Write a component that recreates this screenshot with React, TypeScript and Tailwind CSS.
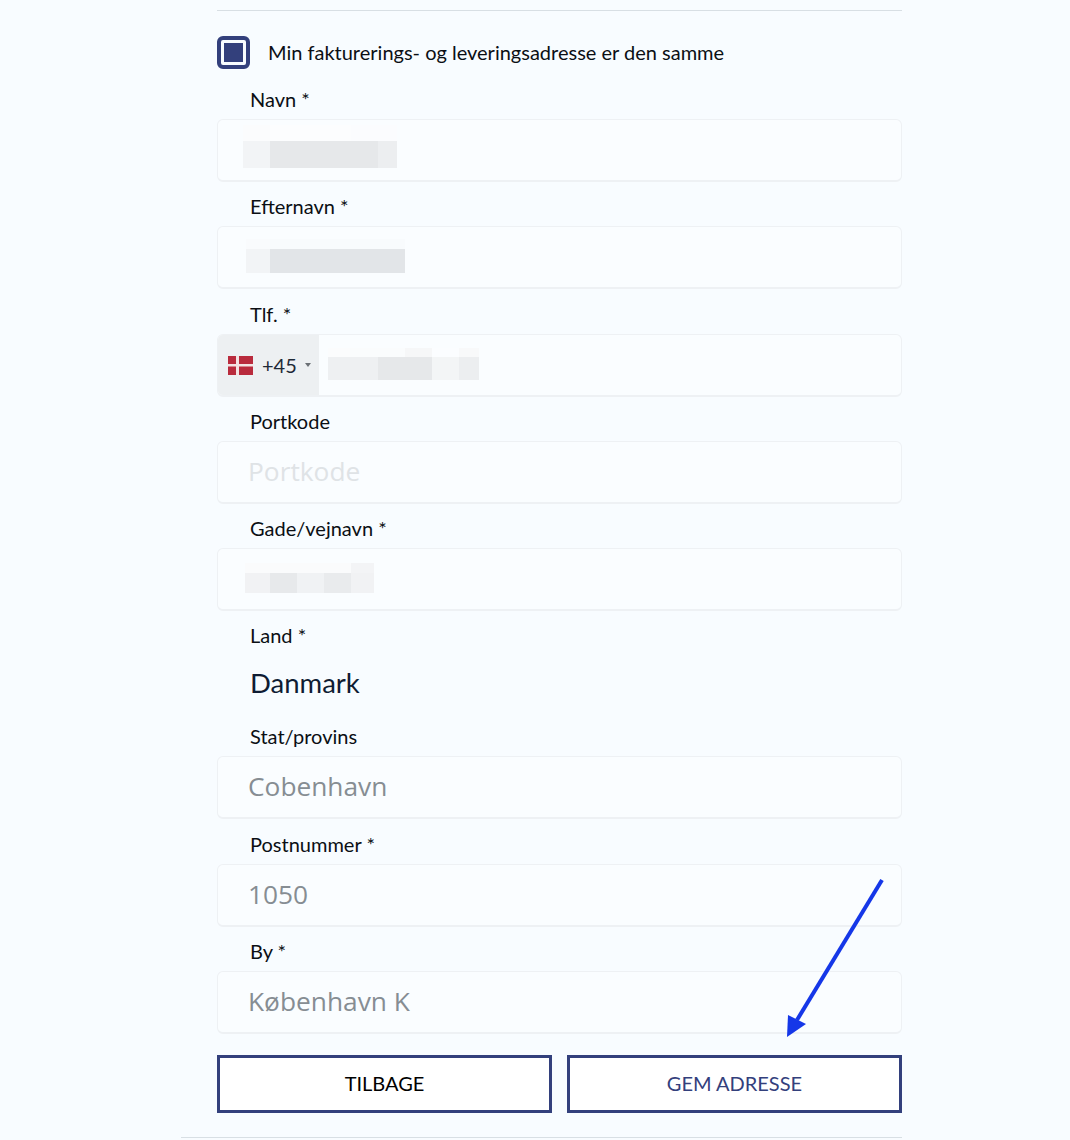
import React from "react";

function Label({ children, className = "pt-[6px]" }: { children: React.ReactNode; className?: string }) {
  return <div className={`h-[38px] pl-[33px] text-[20px] leading-[24px] text-[#0b0f14] font-['Lato',sans-serif] ${className}`}>{children}</div>;
}

function Box({ children, className = "" }: { children?: React.ReactNode; className?: string }) {
  return (
    <div className={`h-[63px] rounded-[6px] border border-[#eef1f4] border-b-2 bg-[#fafdff] flex items-center overflow-hidden font-['Open_Sans',sans-serif] text-[26.3px] ${className}`}>
      {children}
    </div>
  );
}

function Pix({ rows, h, className = "" }: { rows: [number, string][][]; h: number[]; className?: string }) {
  return (
    <div className={`flex flex-col ${className}`}>
      {rows.map((r, i) => (
        <div key={i} className="flex" style={{ height: h[i] }}>
          {r.map(([w, c], j) => (
            <div key={j} style={{ width: w, background: c }} />
          ))}
        </div>
      ))}
    </div>
  );
}

function Arrow() {
  return (
    <svg className="absolute left-[770px] top-[870px]" width="125" height="175" viewBox="0 0 125 175">
      <path d="M112 10 L27 150" stroke="#1537e8" strokeWidth="4" fill="none" />
      <path d="M17 167 L18 145 L36 154 Z" fill="#1537e8" />
    </svg>
  );
}

export default function App() {
  return (
    <div className="relative h-[1140px] w-[1070px] overflow-hidden bg-[#f8fcff]">
      <div className="ml-[217px] w-[685px] pt-[10px]">
        <div className="h-px bg-[#d8dfe4]" />
        <div className="mt-[25px] flex h-[33px] items-center">
          <div className="flex h-[33px] w-[33px] items-center justify-center rounded-[6px] border-[4px] border-[#33407c] bg-[#f8fcff]">
            <div className="h-[19px] w-[19px] bg-[#33407c]" />
          </div>
          <span className="mb-[2px] ml-[18px] font-['Lato',sans-serif] text-[20px] text-[#0b0f14]">Min fakturerings- og leveringsadresse er den samme</span>
        </div>
        <div className="mt-[12px]"><Label>Navn *</Label></div>
        <Box className="pl-[25px]">
          <Pix className="mb-[7px]" h={[16, 27]} rows={[[[27, "#fbfcfd"], [27, "#fcfdfe"], [54, "#fcfdfe"], [46, "#fbfcfe"]], [[27, "#f2f4f6"], [108, "#e6e8ea"], [19, "#eceef0"]]]} />
        </Box>
        <div className="mt-[6px]"><Label>Efternavn *</Label></div>
        <Box className="pl-[28px]">
          <Pix className="mb-[3px]" h={[10, 24]} rows={[[[24, "#f9fbfd"], [135, "#f8fbfd"]], [[24, "#f2f4f6"], [135, "#e2e5e8"]]]} />
        </Box>
        <div className="mt-[7px]"><Label>Tlf. *</Label></div>
        <Box>
          <div className="flex h-full w-[101px] shrink-0 items-center bg-[#edf0f2] pl-[10px] font-['Lato',sans-serif] text-[20px] text-[#1f2a37]">
            <svg width="25" height="19" viewBox="0 0 25 19" className="shrink-0">
              <rect width="25" height="19" fill="#b92b3d" />
              <rect x="8" width="3" height="19" fill="#f3e3e3" />
              <rect y="8" width="25" height="2.5" fill="#f3e3e3" />
            </svg>
            <span className="ml-[9px]">+45</span>
            <span className="ml-[8px] h-0 w-0 border-x-[3.5px] border-t-[4px] border-x-transparent border-t-[#6b7075]" />
          </div>
          <div className="mb-[3px] ml-[9px]">
            <Pix h={[9, 23]} rows={[[[22, "#fbfcfd"], [55, "#fafcfd"], [27, "#f6f7f8"], [27, "#fbfdff"], [20, "#f8f9fa"]], [[50, "#eef0f2"], [54, "#e6e8ea"], [27, "#f3f5f6"], [20, "#eceef0"]]]} />
          </div>
        </Box>
        <div className="mt-[6px]"><Label>Portkode</Label></div>
        <Box className="pl-[30px] text-[#dfe3e6]">Portkode</Box>
        <div className="mt-[6px]"><Label>Gade/vejnavn *</Label></div>
        <Box className="pl-[27px]">
          <Pix className="mb-[3px]" h={[10, 20]} rows={[[[25, "#fafbfc"], [27, "#fafbfc"], [54, "#fafbfc"], [23, "#f3f4f6"]], [[25, "#f1f2f4"], [27, "#e7e9eb"], [27, "#f0f2f4"], [27, "#e9ebed"], [23, "#f1f2f4"]]]} />
        </Box>
        <div className="mt-[6px]"><Label>Land *</Label></div>
        <div className="h-[63px] pl-[33px] pt-[10px] font-['Lato',sans-serif] text-[27.5px] leading-[36px] text-[#0f1c33]">Danmark</div>
        <Label className="pt-[6px]">Stat/provins</Label>
        <Box className="pl-[30px] text-[#868d93]">Cobenhavn</Box>
        <div className="mt-[7px]"><Label>Postnummer *</Label></div>
        <Box className="pl-[30px] text-[#868d93]">1050</Box>
        <div className="mt-[6px]"><Label>By *</Label></div>
        <Box className="pl-[30px] text-[#868d93]">København K</Box>
        <div className="mt-[21px] flex gap-[15px]">
          <button className="h-[58px] flex-1 border-[3px] border-[#33407c] bg-white pb-[2px] font-['Lato',sans-serif] text-[20px] text-black">TILBAGE</button>
          <button className="h-[58px] flex-1 border-[3px] border-[#33407c] bg-white pb-[2px] font-['Lato',sans-serif] text-[20px] text-[#33407c]">GEM ADRESSE</button>
        </div>
      </div>
      <div className="ml-[181px] mt-[24px] h-px w-[721px] bg-[#d8dfe4]" />
      <Arrow />
    </div>
  );
}
